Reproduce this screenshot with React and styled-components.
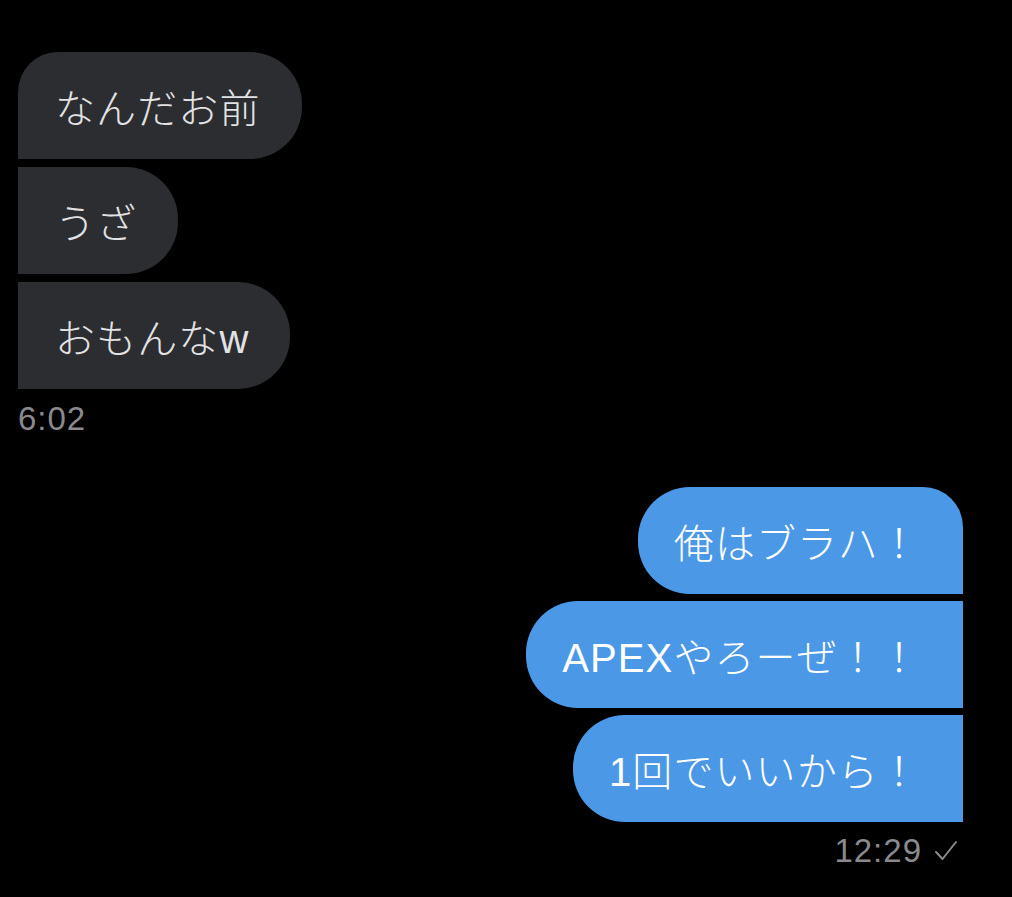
import React from 'react';
import styled, { createGlobalStyle } from 'styled-components';

const GlobalStyle = createGlobalStyle`
  html, body {
    margin: 0;
    padding: 0;
    background: #000;
  }
  body {
    font-family: "Liberation Sans", "Noto Sans CJK JP", sans-serif;
  }
`;

const Screen = styled.div`
  width: 1012px;
  height: 897px;
  background: #000;
  box-sizing: border-box;
  padding: 52px 49px 0 18px;
  display: flex;
  flex-direction: column;
`;

const Group = styled.div`
  display: flex;
  flex-direction: column;
  align-items: ${p => (p.$mine ? 'flex-end' : 'flex-start')};
  gap: ${p => (p.$mine ? '7px' : '8px')};
  margin-top: ${p => (p.$mine ? '48px' : '0')};
`;

const radius = (mine, pos) => {
  if (mine) return pos === 'first' ? '52px 40px 0 52px' : '52px 0 0 52px';
  return pos === 'first' ? '40px 52px 52px 0' : '0 52px 52px 0';
};

const Bubble = styled.div`
  box-sizing: border-box;
  height: 107px;
  display: flex;
  align-items: center;
  padding: ${p => (p.$mine ? '0 43px 0 36px' : '0 41px 0 37px')};
  font-family: "Liberation Sans", "Noto Sans CJK JP", sans-serif;
  font-size: 40px;
  font-weight: 300;
  letter-spacing: 1.1px;
  white-space: nowrap;
  color: ${p => (p.$mine ? '#ffffff' : '#e2e2e4')};
  background: ${p => (p.$mine ? '#4b98e6' : '#2c2d30')};
  border-radius: ${p => radius(p.$mine, p.$pos)};
`;

const Meta = styled.div`
  display: flex;
  align-items: center;
  gap: 12px;
  margin-top: 2px;
  font-family: "Liberation Sans", Arial, sans-serif;
  font-size: 33px;
  line-height: 40px;
  letter-spacing: 1px;
  color: #8a8a8e;
  padding-right: ${p => (p.$mine ? '5px' : '0')};
`;

const Check = () => (
  <svg width="24" height="22" viewBox="0 0 24 22" fill="none">
    <path d="M2 12 L8.5 19 L22 2" stroke="#8a8a8e" strokeWidth="2" strokeLinecap="round" strokeLinejoin="round" />
  </svg>
);

const theirs = ['なんだお前', 'うざ', 'おもんなw'];
const mine = ['俺はブラハ！', 'APEXやろーぜ！！', '1回でいいから！'];

const posOf = (i, n) => (i === 0 ? 'first' : i === n - 1 ? 'last' : 'middle');

export default function App() {
  return (
    <>
      <GlobalStyle />
      <Screen>
        <Group>
          {theirs.map((t, i) => (
            <Bubble key={t} $pos={posOf(i, theirs.length)}>{t}</Bubble>
          ))}
          <Meta>6:02</Meta>
        </Group>
        <Group $mine>
          {mine.map((t, i) => (
            <Bubble key={t} $mine $pos={posOf(i, mine.length)}>{t}</Bubble>
          ))}
          <Meta $mine>
            12:29
            <Check />
          </Meta>
        </Group>
      </Screen>
    </>
  );
}
